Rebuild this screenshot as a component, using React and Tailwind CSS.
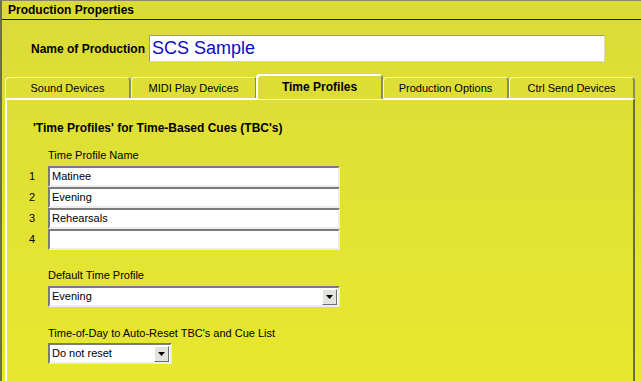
import React from 'react';

const sunken =
  'bg-white border-2 border-t-[#7a7a7a] border-l-[#7a7a7a] border-b-[#ececec] border-r-[#ececec]';

const TextBox = ({ value, className = '' }) => (
  <div className={`${sunken} h-[21px] flex items-center pl-[2px] ${className}`}>{value}</div>
);

const Combo = ({ value, width }) => (
  <div className={`${sunken} h-[21px] flex items-center pl-[2px] pr-[1px] ${width}`}>
    <span className="flex-1">{value}</span>
    <div className="w-[15px] h-[16px] bg-[#e4e2dc] border border-t-white border-l-white border-b-[#6f6f6f] border-r-[#6f6f6f] flex items-center justify-center">
      <svg width="7" height="4" viewBox="0 0 7 4">
        <path d="M0 0h7L3.5 4z" fill="#000" />
      </svg>
    </div>
  </div>
);

const tabs = ['Sound Devices', 'MIDI Play Devices', 'Time Profiles', 'Production Options', 'Ctrl Send Devices'];

export default function App() {
  return (
    <div className="w-[641px] h-[381px] overflow-hidden bg-gradient-to-b from-[#dbdb37] to-[#e8e830] border-t border-l-2 border-t-[#8a8a66] border-l-[#6e6e4c] font-['Liberation_Sans',Arial,sans-serif] text-[11px] text-black">
      {/* title band */}
      <div className="h-[19px] pl-[6px] flex items-center font-bold text-[12px] border-b border-[#1e1e1e]">
        Production Properties
      </div>

      {/* production name */}
      <div className="flex items-center mt-[15px] h-[27px]">
        <div className="w-[147px] pl-[29px] font-bold text-[12px]">Name of Production</div>
        <div className="w-[456px] h-[27px] bg-white border border-t-[#9a9a8a] border-l-[#9a9a8a] border-b-[#d8d8c8] border-r-[#d8d8c8] flex items-center pl-[2px] text-[18px] text-[#0a0ac8]">
          SCS Sample
        </div>
      </div>

      {/* tabs */}
      <div className="flex items-end h-[24px] mt-[12px] ml-[3px] relative z-10">
        {tabs.map((t) =>
          t === 'Time Profiles' ? (
            <div
              key={t}
              className="w-[127px] h-[25px] -mb-[1px] -ml-[1px] bg-[#dddd36] border-t-2 border-l-2 border-r-2 border-t-white border-l-white border-r-[#8a8a6a] rounded-t-[4px] flex items-center justify-center font-bold text-[12px] pb-[2px]"
            >
              {t}
            </div>
          ) : (
            <div
              key={t}
              className="w-[126px] h-[21px] border-t border-l border-r-2 border-t-[#f6f6e0] border-l-[#f6f6e0] border-r-[#8a8a6a] rounded-t-[4px] flex items-center justify-center"
            >
              {t}
            </div>
          )
        )}
      </div>

      {/* panel */}
      <div className="ml-[3px] w-[630px] h-[300px] border-t-2 border-l-2 border-t-white border-l-white border-r-2 border-r-[#6a6a48] pl-[22px]">
        <div className="ml-[4px] mt-[21px] h-[14px] leading-[14px] font-bold text-[12px]">
          'Time Profiles' for Time-Based Cues (TBC's)
        </div>
        <div className="ml-[19px] mt-[14px] h-[13px] leading-[13px]">Time Profile Name</div>
        <div className="mt-[4px] flex flex-col">
          {['Matinee', 'Evening', 'Rehearsals', ''].map((v, i) => (
            <div key={i} className="flex items-center">
              <span className="w-[19px]">{i + 1}</span>
              <TextBox value={v} className="w-[292px]" />
            </div>
          ))}
        </div>
        <div className="ml-[19px] mt-[19px] h-[13px] leading-[13px]">Default Time Profile</div>
        <div className="ml-[19px] mt-[4px]">
          <Combo value="Evening" width="w-[292px]" />
        </div>
        <div className="ml-[19px] mt-[20px] h-[13px] leading-[13px]">
          Time-of-Day to Auto-Reset TBC's and Cue List
        </div>
        <div className="ml-[19px] mt-[3px]">
          <Combo value="Do not reset" width="w-[124px]" />
        </div>
      </div>
    </div>
  );
}
